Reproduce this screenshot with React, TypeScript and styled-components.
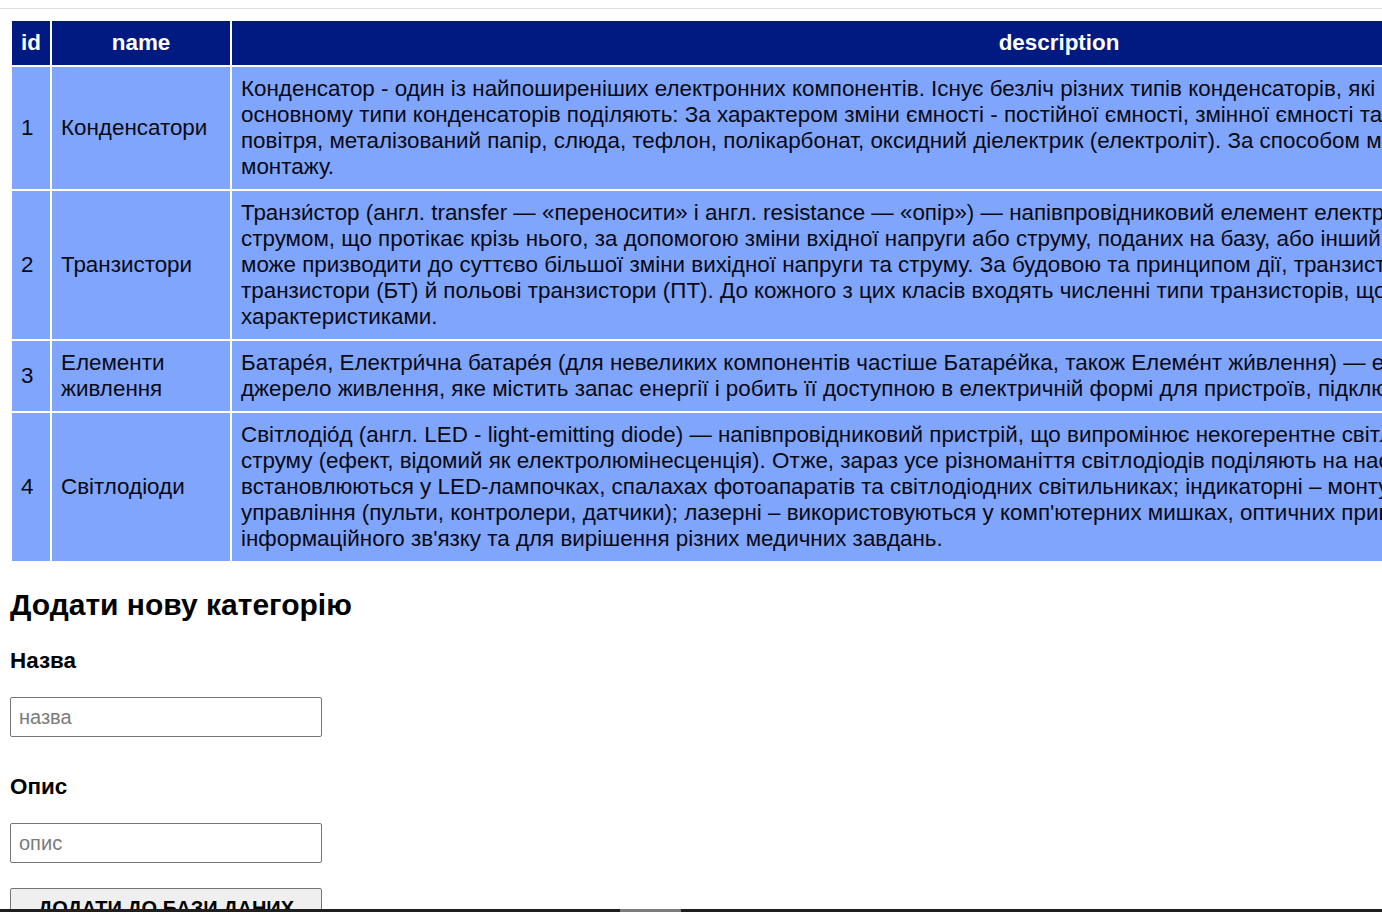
import React from "react";
import styled, { createGlobalStyle } from "styled-components";

const GlobalStyle = createGlobalStyle`
  html, body {
    margin: 0;
    padding: 0;
    background: #ffffff;
    color: #000000;
    font-family: "Liberation Sans", Arial, sans-serif;
  }
  * { box-sizing: border-box; }
`;

type Category = {
  id: number;
  name: string;
  description: string[];
};

const categories: Category[] = [
  {
    id: 1,
    name: "Конденсатори",
    description: [
      "Конденсатор - один із найпоширеніших електронних компонентів. Існує безліч різних типів конденсаторів, які класифікуються за різними ознаками. В",
      "основному типи конденсаторів поділяють: За характером зміни ємності - постійної ємності, змінної ємності та підлаштувальні. За матеріалом діелектрика - вакуум,",
      "повітря, металізований папір, слюда, тефлон, полікарбонат, оксидний діелектрик (електроліт). За способом монтажу - для друкованого та навісного",
      "монтажу.",
    ],
  },
  {
    id: 2,
    name: "Транзистори",
    description: [
      "Транзи́стор (англ. transfer — «переносити» і англ. resistance — «опір») — напівпровідниковий елемент електронної техніки, який дозволяє керувати",
      "струмом, що протікає крізь нього, за допомогою зміни вхідної напруги або струму, поданих на базу, або інший електрод. Невелика зміна вхідних величин",
      "може призводити до суттєво більшої зміни вихідної напруги та струму. За будовою та принципом дії, транзистори поділяють на два класи: біполярні",
      "транзистори (БТ) й польові транзистори (ПТ). До кожного з цих класів входять численні типи транзисторів, що відрізняються будовою та",
      "характеристиками.",
    ],
  },
  {
    id: 3,
    name: "Елементи живлення",
    description: [
      "Батаре́я, Електри́чна батаре́я (для невеликих компонентів частіше Батаре́йка, також Елеме́нт жи́влення) — електрохімічне",
      "джерело живлення, яке містить запас енергії і робить її доступною в електричній формі для пристроїв, підключених до неї.",
    ],
  },
  {
    id: 4,
    name: "Світлодіоди",
    description: [
      "Світлодіо́д (англ. LED - light-emitting diode) — напівпровідниковий пристрій, що випромінює некогерентне світло при пропусканні через нього електричного",
      "струму (ефект, відомий як електролюмінесценція). Отже, зараз усе різноманіття світлодіодів поділяють на наступні групи: освітлювальні – використовуються та",
      "встановлюються у LED-лампочках, спалахах фотоапаратів та світлодіодних світильниках; індикаторні – монтуються у приладах та пристроях",
      "управління (пульти, контролери, датчики); лазерні – використовуються у комп'ютерних мишках, оптичних приводах, системах передачі",
      "інформаційного зв'язку та для вирішення різних медичних завдань.",
    ],
  },
];

const TopRule = styled.div`
  height: 9px;
  border-bottom: 1px solid #e1e1e1;
`;

const Main = styled.main`
  padding: 0 10px;
`;

const Table = styled.table`
  margin-top: 10px;
  width: 1878px;
  table-layout: fixed;
  border-collapse: separate;
  border-spacing: 2px;
  font-size: 22.4px;
  line-height: normal;
`;

const Col = styled.col<{ $w: number }>`
  width: ${(p) => p.$w}px;
`;

const HeadCell = styled.th`
  background: #011a82;
  color: #ffffff;
  font-weight: bold;
  text-align: center;
  padding: 9px;
  white-space: nowrap;
`;

const Cell = styled.td<{ $nowrap?: boolean }>`
  background: #80a5fd;
  color: #0a0a14;
  text-align: left;
  vertical-align: middle;
  padding: 9px;
  white-space: ${(p) => (p.$nowrap ? "nowrap" : "normal")};
  overflow: hidden;
`;

const Form = styled.form`
  display: flex;
  flex-direction: column;
  align-items: flex-start;
`;

const Heading = styled.h2`
  margin: 25px 0 26px;
  font-size: 30px;
  line-height: normal;
  font-weight: bold;
  color: #000000;
`;

const Field = styled.div<{ $after: number }>`
  display: flex;
  flex-direction: column;
  align-items: flex-start;
  gap: 23px;
  margin-bottom: ${(p) => p.$after}px;
`;

const Label = styled.label`
  font-size: 22.4px;
  line-height: normal;
  font-weight: bold;
  color: #000000;
`;

const TextInput = styled.input`
  width: 312px;
  height: 40px;
  padding: 0 8px;
  border: 1px solid #767676;
  border-radius: 2px;
  background: #ffffff;
  font-family: "Liberation Sans", Arial, sans-serif;
  font-size: 20px;
  color: #000000;
  &::placeholder {
    color: #7a7a7a;
  }
`;

const SubmitButton = styled.button`
  width: 312px;
  height: 40px;
  border: 1px solid #767676;
  border-radius: 2px;
  background: #efefef;
  font-family: "Liberation Sans", Arial, sans-serif;
  font-size: 20px;
  font-weight: bold;
  text-transform: uppercase;
  color: #000000;
  cursor: pointer;
`;

const ScrollTrack = styled.div`
  position: fixed;
  left: 0;
  right: 0;
  bottom: 0;
  height: 3px;
  background: #1f1f1f;
`;

const ScrollThumb = styled.div`
  position: absolute;
  left: 620px;
  width: 61px;
  top: 0;
  bottom: 0;
  background: #7d7d7d;
`;

export default function App() {
  return (
    <>
      <GlobalStyle />
      <TopRule />
      <Main>
        <Table>
          <colgroup>
            <Col $w={38} />
            <Col $w={178} />
            <Col $w={1654} />
          </colgroup>
          <thead>
            <tr>
              <HeadCell>id</HeadCell>
              <HeadCell>name</HeadCell>
              <HeadCell>description</HeadCell>
            </tr>
          </thead>
          <tbody>
            {categories.map((c) => (
              <tr key={c.id}>
                <Cell>{c.id}</Cell>
                <Cell>{c.name}</Cell>
                <Cell $nowrap>
                  {c.description.map((line, i) => (
                    <React.Fragment key={i}>
                      {i > 0 && <br />}
                      {line}
                    </React.Fragment>
                  ))}
                </Cell>
              </tr>
            ))}
          </tbody>
        </Table>
        <Form onSubmit={(e) => e.preventDefault()}>
          <Heading>Додати нову категорію</Heading>
          <Field $after={37}>
            <Label htmlFor="name">Назва</Label>
            <TextInput id="name" type="text" placeholder="назва" />
          </Field>
          <Field $after={25}>
            <Label htmlFor="description">Опис</Label>
            <TextInput id="description" type="text" placeholder="опис" />
          </Field>
          <SubmitButton type="submit">Додати до бази даних</SubmitButton>
        </Form>
      </Main>
      <ScrollTrack aria-hidden="true">
        <ScrollThumb />
      </ScrollTrack>
    </>
  );
}
